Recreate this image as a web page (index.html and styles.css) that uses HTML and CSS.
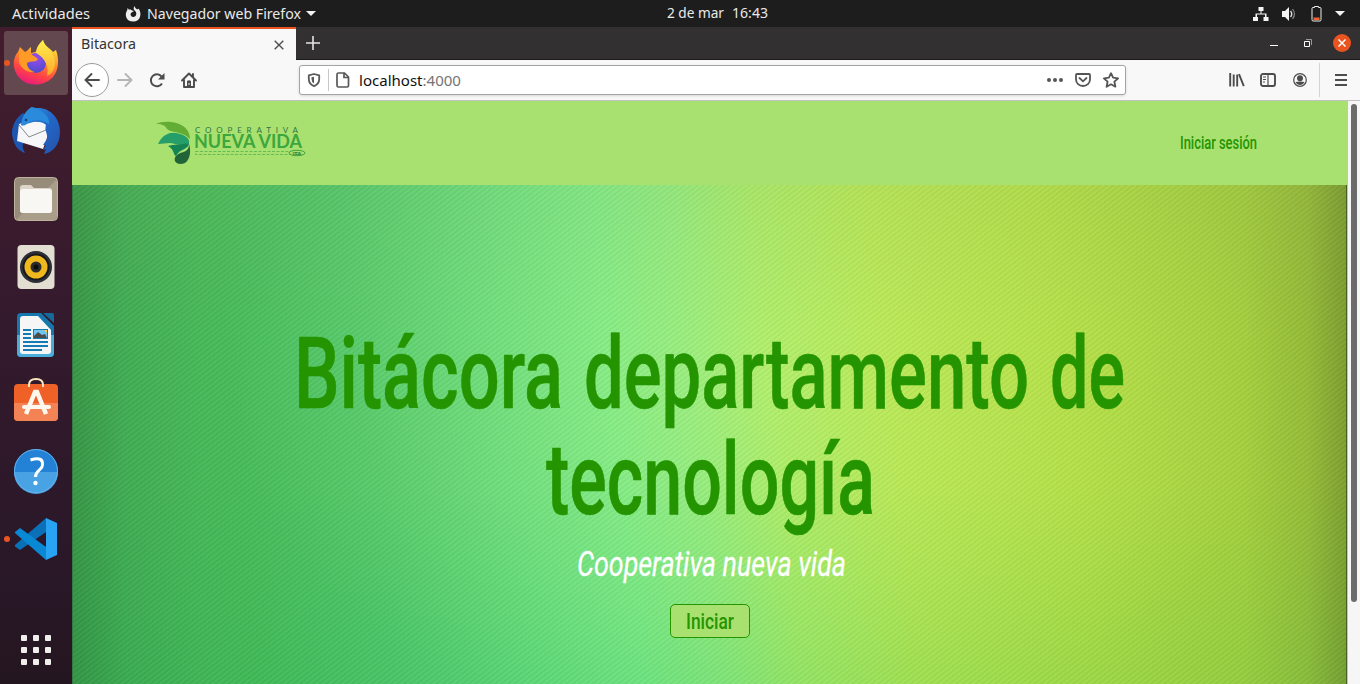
FILE: index.html
```html
<!DOCTYPE html>
<html lang="es">
<head>
<meta charset="utf-8">
<title>Bitacora</title>
<link rel="stylesheet" href="styles.css">
</head>
<body>
<div class="desktop">
  <header class="topbar">
    <div class="topbar-left">
      <svg class="label" width="80" height="27"><text x="0" y="18.5" textLength="78" lengthAdjust="spacingAndGlyphs">Actividades</text></svg>
      <svg class="ff-mark" width="16" height="16" viewBox="0 0 16 16"><path fill="#eee" d="M9.500 0c.6 1.600.6 2.200 2.500 3.200 1 .1 1.500-.4 1.600-.8 3.500 4.800 2.200 13-5.400 13.200C1 15.600-.8 8.500 2.200 4.200L2.600 2l1.400 1.800C5.500 3 6.600 4 7 4.600L9 5 6.300 6.800c-.8 1-1 1.300-.4 2.700 1 2 4 2 5.100-.2C12 6.300 10.500 5.300 9.200 4 8.200 2.800 8.800 1 9.500 0z"/></svg>
      <svg class="label" width="156" height="27"><text x="0" y="18.500" textLength="154" lengthAdjust="spacingAndGlyphs">Navegador web Firefox</text></svg>
      <i class="caret"></i>
    </div>
    <svg class="label clock" width="104" height="27"><text x="0" y="18" textLength="57" lengthAdjust="spacingAndGlyphs">2 de mar</text><text x="65" y="18" textLength="36" lengthAdjust="spacingAndGlyphs">16:43</text></svg>
    <div class="tray">
      <svg width="16" height="14" viewBox="0 0 16 14"><path fill="#f4f4f4" d="M5.500 0h5v4h-2v2.500h5V10H15.500v4h-5v-4h1.500V7.500h-8V10H5v4H0v-4h2.500V6.500h5V4h-2z"/></svg>
      <svg width="16" height="14" viewBox="0 0 16 14"><path fill="#f4f4f4" d="M1 4h3l4-4v14l-4-4H1z"/><path d="M9.500 4q2.500 3 0 6" stroke="#ddd" fill="none" stroke-width="1.400"/><path d="M11.500 2q4 5 0 10" stroke="#888" fill="none" stroke-width="1.200"/></svg>
      <svg width="11" height="16" viewBox="0 0 11 16"><path fill="none" stroke="#eee" d="M1 2.500q0-1 1-1h1.500V.5h4v1H9q1 0 1 1v11q0 1.500-1 1.500H2q-1 0-1-1.500z"/><path fill="#f1642e" d="M2.500 11.500h6v2.500h-6z"/></svg>
      <i class="caret"></i>
    </div>
  </header>

  <div class="workspace">
    <aside class="dock">
      <div class="dock-item current">
        <svg width="48" height="48" viewBox="0 0 48 48">
          <defs>
            <linearGradient id="fx" x1=".75" y1="0" x2=".35" y2="1"><stop offset=".1" stop-color="#ffdf3c"/><stop offset=".45" stop-color="#ff8b27"/><stop offset=".75" stop-color="#ff4147"/><stop offset="1" stop-color="#e81c7c"/></linearGradient>
            <radialGradient id="globe" cx=".5" cy=".25" r=".8"><stop offset="0" stop-color="#9a4bf0"/><stop offset="1" stop-color="#474cc8"/></radialGradient>
            <linearGradient id="tail" x1="0" y1="0" x2="0" y2="1"><stop offset="0" stop-color="#fff24e"/><stop offset="1" stop-color="#ffa62c"/></linearGradient>
          </defs>
          <path fill="url(#fx)" d="M31 1c1 6 7 8 10 12l3-2c4 11 2 22-4 28C27 51 5 46 2 28 1 22 3 16 6 13l2-5 5 5c3-1 4-4 6-5l0 6c3-1 5-1 6-2 0-5 3-8 6-11z"/>
          <circle cx="24" cy="24" r="10" fill="url(#globe)"/>
          <path fill="url(#tail)" d="M31 1c1 6 7 8 10 15 4 8 2 18-6 21 2-9-1-17-11-23 0-6 4-9 7-13z"/>
          <path fill="#ff9a27" d="M7 12l6 1c3-1 5 2 9 4l4 3c-2 4-7 1-11 4 0 4 3 8 8 9-9 1-14-4-16-10z"/>
        </svg>
        <i class="running"></i>
      </div>
      <div class="dock-item">
        <svg width="50" height="50" viewBox="0 0 50 50">
          <defs><linearGradient id="tb" x1="0" y1="0" x2="1" y2="1"><stop offset="0" stop-color="#2f9be0"/><stop offset=".5" stop-color="#2367c8"/><stop offset="1" stop-color="#2452a8"/></linearGradient></defs>
          <path fill="#1d56b0" d="M12 7C3 13-1 24 2 33c2 8 6 12 12 14-2-4-3-6-2-9L30 20z"/>
          <path fill="#f7f7fa" d="M8 18l9-3 20 1 1 9-3 10-3 8L6 35z"/>
          <path d="M8 19l10 12 17-7" fill="none" stroke="#888" stroke-width="1"/>
          <path fill="url(#tb)" d="M10 19C11 8 18 2 21 1l4 1c14-1 24 10 24 24 0 13-8 21-16 22l2-5-3 1 3-5-3 0 4-6c1-6-3-8-1-14-4-4-11-4-16-2-4 0-5 4-9 2z"/>
          <path fill="#2a8bdd" d="M23 2c-8 3-9 9-13 17q4 1 8-3 8-5 20 2c1-8-6-13-15-16z"/><circle cx="15" cy="14" r="1.300" fill="#164279"/>
        </svg>
      </div>
      <div class="dock-item">
        <svg width="46" height="46" viewBox="0 0 46 46"><rect x="1.500" y="1.500" width="43" height="43" rx="4" fill="#968c79" stroke="#bdb39d"/><path d="M44 3v37q0 4-4 4H3z" fill="#a89e89"/><path d="M7 34V12q0-3 3-3h8l3 3h15q3 0 3 3v19q0 3-3 3H10q-3 0-3-3z" fill="#ddd5ca"/><rect x="7" y="13" width="32" height="24" rx="3" fill="#f8f7f4"/></svg>
      </div>
      <div class="dock-item">
        <svg width="38" height="46" viewBox="0 0 38 46"><rect x=".5" y="1" width="37" height="44" rx="4" fill="#e2ded2"/><circle cx="19" cy="23" r="16" fill="#2e3037"/><circle cx="19" cy="23" r="13.500" fill="#17191d"/><circle cx="19" cy="23" r="11.500" fill="#efb91e"/><circle cx="19" cy="23" r="5.500" fill="#2b2b2b"/><circle cx="19" cy="23" r="2.500" fill="#0c0c0c"/></svg>
      </div>
      <div class="dock-item">
        <svg width="38" height="46" viewBox="0 0 38 46"><path fill="#1677ac" d="M4 1h20l13 13v27q0 4-4 4H4q-4 0-4-4V5q0-4 4-4z"/><path fill="#4badda" d="M0 23h37v18q0 4-4 4H4q-4 0-4-4z"/><path fill="#17689b" d="M26 1h9q2 0 2 2v8z"/><path fill="#f6f6f6" d="M6 4h15l13 14v21q0 3-3 3H6q-3 0-3-3V7q0-3 3-3z"/><path stroke="#147bb5" stroke-width="2" d="M6 18h8M6 22h8M6 26h8M6 30h25M6 34h25M6 38h19"/><path fill="#167caf" d="M16 17h15v10H16z"/><path fill="#70c4ed" d="M17 18h13v8H17z"/><path fill="#4b4b4b" d="M17 26v-2l4-4 4 3 3-1 2 4z"/><path fill="#ffc739" d="M27 18h3v3z"/></svg>
      </div>
      <div class="dock-item">
        <svg class="bag" width="46" height="46" viewBox="0 0 46 46"><rect x="1" y="8" width="44" height="37" rx="4" fill="#f06127"/><path fill="#f38254" d="M1 27h44v14q0 4-4 4H5q-4 0-4-4z"/><path fill="none" stroke="#fce5bd" stroke-width="2" d="M16 11V9q0-6 7-6t7 6v2"/><path fill="none" stroke="#fff8ee" stroke-width="4.500" d="M13 38l9-22h2l9 22"/><path stroke="#fff8ee" stroke-width="4" stroke-linecap="round" d="M11 31h25"/></svg>
      </div>
      <div class="dock-item">
        <svg width="46" height="46" viewBox="0 0 46 46"><circle cx="23" cy="23" r="22" fill="#2382d6"/><path fill="#49a2e3" d="M1 24h44a22 22 0 0 1-44 0z"/><circle cx="23" cy="23" r="21.500" fill="none" stroke="#62b1eb"/><path fill="none" stroke="#fff" stroke-width="3" d="M17.500 12q13-4 12 5c0 5-7 5-7 12"/><circle cx="22.500" cy="35" r="2.200" fill="#fff"/></svg>
      </div>
      <div class="dock-item">
        <svg width="44" height="44" viewBox="0 0 44 44"><path fill="#0a70b8" d="M1 29.500l5 3.500 26-18V1L1 28z"/><path fill="#0988d4" d="M1 15l5-4 26 19v13L1 16z"/><path fill="#28a4f3" d="M32 1l11 5v32l-11 5z"/></svg>
        <i class="running"></i>
      </div>
      <div class="app-grid"><i></i><i></i><i></i><i></i><i></i><i></i><i></i><i></i><i></i></div>
    </aside>

    <main class="browser">
      <div class="tabstrip">
        <div class="tab">
          <svg class="label dark" width="57" height="30"><text x="0" y="19" textLength="55" lengthAdjust="spacingAndGlyphs">Bitacora</text></svg>
          <svg width="10" height="10" viewBox="0 0 10 10"><path d="M.7.7l8.600 8.600M9.300.7L.7 9.300" stroke="#4f4f4f" stroke-width="1.400"/></svg>
        </div>
        <svg class="plus" width="14" height="14" viewBox="0 0 14 14"><path d="M7 0v14M0 7h14" stroke="#e4e4e4" stroke-width="1.600"/></svg>
        <div class="window-buttons">
          <svg width="8" height="8" viewBox="0 0 8 8"><path fill="#fff" d="M0 6h8v1H0z"/></svg>
          <svg width="8" height="8" viewBox="0 0 8 8"><path fill="none" stroke="#fff" d="M.5 2.500h5v5h-5z"/><path fill="none" stroke="#999" d="M2 .5h5.500V6"/></svg>
          <svg width="18" height="18" viewBox="0 0 18 18"><circle cx="9" cy="9" r="9" fill="#e95420"/><path d="M5.500 5.500l7 7M12.500 5.500l-7 7" stroke="#fff" stroke-width="1.500"/></svg>
        </div>
      </div>

      <div class="toolbar">
        <div class="nav-buttons">
          <span class="back"><svg width="16" height="14" viewBox="0 0 16 14"><path d="M7.500 1L1.500 7l6 6M1.500 7H15" fill="none" stroke="#4c4c4c" stroke-width="1.900" stroke-linecap="round"/></svg></span>
          <svg width="16" height="14" viewBox="0 0 16 14"><path d="M8.500 1l6 6-6 6M14.500 7H1" fill="none" stroke="#b5b5b5" stroke-width="1.900" stroke-linecap="round"/></svg>
          <svg width="16" height="16" viewBox="0 0 16 16"><path d="M13 11.500A6 6 0 1 1 12.500 4.500" fill="none" stroke="#4c4c4c" stroke-width="2"/><path fill="#4c4c4c" d="M15.500 1v6.500H9z"/></svg>
          <svg width="16" height="16" viewBox="0 0 16 16"><path fill="none" stroke="#4c4c4c" stroke-width="1.900" stroke-linejoin="round" stroke-linecap="round" d="M1 8.500l7-7 7 7M3 7.500V15h10V7.500M12 4.500V2"/><path fill="#4c4c4c" d="M6 9q2-1.500 4 0v6H6z"/><path fill="#f8f8f8" d="M7.500 11h1v2h-1z"/></svg>
        </div>
        <div class="urlbar">
          <svg width="14" height="16" viewBox="0 0 14 16"><path d="M7 2L1.800 3.300V7q0 5 5.200 7.200Q12.200 12 12.200 7V3.300z" fill="none" stroke="#585858" stroke-width="1.800" stroke-linejoin="round"/><path fill="#585858" d="M7 4.800v6.700Q4.500 10 4.500 7V5.300z"/></svg>
          <i class="divider"></i>
          <svg class="page-icon" width="14" height="16" viewBox="0 0 14 16"><path d="M1 2.500Q1 1 2.500 1H8.500l4 4v8.500q0 1.500-1.500 1.500h-8.500Q1 15 1 13.500zM8 1v4.500H12.500" fill="none" stroke="#585858" stroke-width="1.700"/></svg>
          <svg class="label address" width="104" height="28"><text x="0" y="19.500" textLength="102" lengthAdjust="spacingAndGlyphs">localhost<tspan fill="#747474">:4000</tspan></text></svg>
          <div class="url-actions">
            <svg width="16" height="16" viewBox="0 0 16 16" fill="#555"><circle cx="2" cy="8" r="2"/><circle cx="8" cy="8" r="2"/><circle cx="14" cy="8" r="2"/></svg>
            <svg width="16" height="16" viewBox="0 0 16 16"><path d="M2 2h12q1 0 1 1v4.500a7 6.500 0 0 1-14 0V3q0-1 1-1z" fill="none" stroke="#555" stroke-width="1.800"/><path d="M4.500 6L8 9.300 11.500 6" fill="none" stroke="#555" stroke-width="1.800" stroke-linecap="round"/></svg>
            <svg width="16" height="16" viewBox="0 0 16 16"><path d="M8 1.200l2.100 4.500 5 .6-3.700 3.400 1 5L8 12.300l-4.400 2.400 1-5L.9 6.300l5-.6z" fill="none" stroke="#555" stroke-width="1.800" stroke-linejoin="round"/></svg>
          </div>
        </div>
        <div class="tools">
          <svg width="16" height="14" viewBox="0 0 16 14"><path d="M1.200 0v13.500M4.700 1.500v12M8.200 1.500v12M10 1.200l4.800 12" stroke="#4c4c4c" stroke-width="1.900" fill="none"/></svg>
          <svg width="16" height="14" viewBox="0 0 16 14"><rect x="1" y="1" width="14" height="12" rx="2" fill="none" stroke="#4c4c4c" stroke-width="1.900"/><path d="M8 1v12M3 4h3M3 6.500h3M3 9h2" stroke="#4c4c4c" stroke-width="1.200"/></svg>
          <svg width="14" height="14" viewBox="0 0 14 14"><circle cx="7" cy="7" r="6.300" fill="none" stroke="#4c4c4c" stroke-width="1.200"/><circle cx="7" cy="5.300" r="3" fill="#4c4c4c"/><path fill="#4c4c4c" d="M2.500 9Q7 8 11.500 9 10 12 7 12T2.500 9z"/></svg>
        </div>
        <div class="menu"><svg width="12" height="12" viewBox="0 0 12 12"><path d="M0 1h12M0 6h12M0 11h12" stroke="#4c4c4c" stroke-width="1.900"/></svg></div>
      </div>

      <div class="viewport">
        <div class="page">
          <nav class="site-nav">
            <svg class="logo" width="152" height="46" viewBox="0 0 152 46">
              <path fill="#63ad34" d="M0 4C9-1 34 1 34 19 27 11 15 13 11 9 8 4 4 4 0 4z"/>
              <path fill="#269e69" d="M2 24C8 11 19 11 27 15q7 3 6 8-7 3-14 1c-6-2-10 0-17 0z"/>
              <path fill="#148455" d="M12 26c5-2 13-1 21-3 0 7-9 5-13 13-3-1-1-6-8-10z"/>
              <path fill="#206438" d="M33 24c3 9 0 20-8 20-7 0-8-6-4-9 5-4 12-2 12-11z"/>
              <g class="logo-text">
                <text x="39" y="12.500" font-size="8" fill="#2e763d" textLength="103">COOPERATIVA</text>
                <text x="38" y="28" font-size="18.500" font-weight="700" fill="#3da63c" textLength="108" lengthAdjust="spacingAndGlyphs">NUEVA VIDA</text>
                <rect x="39.500" y="31.500" width="94" height="3" fill="none" stroke="#57b14b" stroke-width=".8" stroke-dasharray="3 1.500"/>
                <ellipse cx="141" cy="33" rx="8" ry="2.700" fill="#a9e171" stroke="#40a23b"/>
                <text x="136.500" y="34.700" font-size="4.500" font-weight="700" fill="#267b35" textLength="9">LTDA.</text>
              </g>
            </svg>
            <a class="login"><svg width="80" height="28"><text x="1" y="20" font-size="18" textLength="77" lengthAdjust="spacingAndGlyphs">Iniciar sesión</text></svg></a>
          </nav>
          <section class="hero">
            <h1 class="title">
              <svg width="860" height="107"><g font-size="99.500"><text x="14" y="82" textLength="269" lengthAdjust="spacingAndGlyphs">Bitácora</text><text x="304" y="82" textLength="445" lengthAdjust="spacingAndGlyphs">departamento</text><text x="770" y="82" textLength="75" lengthAdjust="spacingAndGlyphs">de</text></g></svg>
              <svg width="860" height="107"><text x="266" y="81" font-size="99.500" textLength="329" lengthAdjust="spacingAndGlyphs">tecnología</text></svg>
            </h1>
            <p class="subtitle"><svg width="290" height="50"><text x="12" y="36.500" font-size="35" textLength="269" lengthAdjust="spacingAndGlyphs">Cooperativa nueva vida</text></svg></p>
            <a class="start"><svg width="50" height="32"><text x="1" y="24" font-size="22" textLength="48" lengthAdjust="spacingAndGlyphs">Iniciar</text></svg></a>
          </section>
        </div>
        <div class="scrollbar"><i></i></div>
      </div>
    </main>
  </div>
</div>
</body>
</html>
```
FILE: styles.css
```css
* { box-sizing: border-box; }
body { margin: 0; font-family: "Noto Sans", "Open Sans", sans-serif; overflow: hidden; }
svg { display: block; flex: none; overflow: visible; }

.desktop { width: 1360px; height: 684px; display: flex; flex-direction: column; }
.label { font-size: 14px; fill: #e9e9e9; }
.label.dark { fill: #333; }
.caret { border: 5px solid transparent; border-top-color: #f2f2f2; border-bottom: 0; }

.topbar { height: 27px; flex: none; background: #1d1d1d; display: grid; grid-template-columns: 667px 1fr auto; align-items: center; padding-right: 15px; }
.topbar-left { display: flex; align-items: center; padding-left: 12px; }
.ff-mark { margin: 0 6px 0 33px; }
.topbar-left .caret { margin-left: 3px; }
.tray { display: flex; align-items: center; gap: 13px; }
.tray svg:first-child { margin-right: -1px; }
.tray svg:nth-child(2) { margin-right: 1px; }

.workspace { flex: 1; display: flex; min-height: 0; }
.dock { width: 72px; flex: none; display: flex; flex-direction: column; align-items: center; gap: 4px; padding-top: 4px; background: linear-gradient(#431d2d, #341a2d 45%, #2a1829 80%, #241620); }
.dock-item { position: relative; width: 64px; height: 64px; display: flex; align-items: center; justify-content: center; border-radius: 3px; }
.current { background: #644850; }
.bag { margin-bottom: 8px; }
.running { position: absolute; left: 0; top: 29px; width: 6px; height: 6px; border-radius: 50%; background: #e95420; }
.app-grid { display: grid; grid-template-columns: repeat(3, 6px); gap: 6px; margin-top: 60px; }
.app-grid i { width: 6px; height: 6px; border-radius: 1px; background: #f1efec; }

.browser { flex: 1; display: flex; flex-direction: column; min-width: 0; }
.tabstrip { height: 33px; flex: none; display: flex; background: #333031; border-bottom: 1px solid #1c1b1c; }
.tab { width: 224px; height: 33px; background: #f8f8f8; border-top: 2px solid #e95420; display: flex; align-items: center; justify-content: space-between; padding: 0 12px 0 9px; }
.plus { margin: 9px 0 0 10px; }
.window-buttons { margin-left: auto; display: flex; align-items: center; gap: 26px; padding-right: 9px; }
.window-buttons svg:last-child { margin-left: -5px; }

.toolbar { height: 41px; flex: none; display: flex; align-items: center; background: #f8f8f8; border-bottom: 1px solid #c2c2c2; }
.nav-buttons { width: 227px; display: flex; align-items: center; gap: 16px; padding-left: 3px; }
.back { width: 34px; height: 34px; margin-right: -8px; border: 1px solid #9c9c9c; border-radius: 50%; background: #fff; display: flex; align-items: center; justify-content: center; }
.urlbar { width: 827px; height: 30px; border: 1px solid #a4a4a4; border-radius: 3px; background: #fff; box-shadow: 0 1px 3px #0002; display: flex; align-items: center; padding: 0 6px 0 7px; }
.divider { width: 1px; height: 22px; margin: 0 7px; background: #c8c8c8; }
.address { margin-left: 9px; fill: #111; }
.url-actions { margin-left: auto; display: flex; gap: 12px; }
.tools { margin-left: auto; display: flex; align-items: center; gap: 16px; padding-right: 12px; }
.tools svg:nth-child(2) { margin: 0 1px 0 -1px; }
.menu { width: 41px; height: 34px; border-left: 1px solid #d4d4d4; display: flex; align-items: center; padding-left: 15px; }

.viewport { flex: 1; display: flex; min-height: 0; }
.page { flex: 1; display: flex; flex-direction: column; background: #a9e171; font-family: Roboto, sans-serif; }
.site-nav { height: 84px; flex: none; display: flex; justify-content: space-between; align-items: center; background: #a9e171; padding: 0 89px 0 84px; }
.logo-text { font-family: Lato, sans-serif; }
.login { fill: #249500; font-weight: 500; }
.hero {
  flex: 1; display: flex; flex-direction: column; align-items: center; padding-top: 141px;
  margin-right: 1px; border-right: 1px solid #46601f; border-left: 1px solid #367a43;
  background:
    repeating-linear-gradient(142deg, #1a70200c 0 1.500px, #ffffff0c 2px 3.500px, #1a70200c 4px),
    linear-gradient(90deg, #18502048, #18502014 4%, transparent 10%, transparent 92%, #3d501818 97%, #3d501850),
    radial-gradient(ellipse 42% 75% at 54% 38%, #e8ff803c, transparent),
    linear-gradient(180deg, #8a9a5c18, transparent 30%, transparent 60%, #10b04820),
    linear-gradient(84deg, #40ad53 0, #46b959 14%, #4fc669 24%, #63db7d 35%, #74e886 43%, #88e97e 49%, #a2e965 55%, #b2e44f 64%, #b1dd43 77%, #a6d03c 89%, #99be38 100%);
}
.title { margin: 0; fill: #249500; stroke: #249500; stroke-width: .6; font-weight: 500; }
.subtitle { margin: -1px 0 0; fill: #fff; stroke: #fff; stroke-width: .3; font-style: italic; }
.start { margin-top: 15px; width: 80px; height: 34px; border: 1px solid #249500; border-radius: 5px; background: #a9e171; fill: #249500; font-weight: 500; display: flex; align-items: center; justify-content: center; }
.scrollbar { width: 12px; background: #f6f6f6; padding: 3px 3px 0; }
.scrollbar i { display: block; height: 498px; border-radius: 3px; background: #6b6b6b; }
```
